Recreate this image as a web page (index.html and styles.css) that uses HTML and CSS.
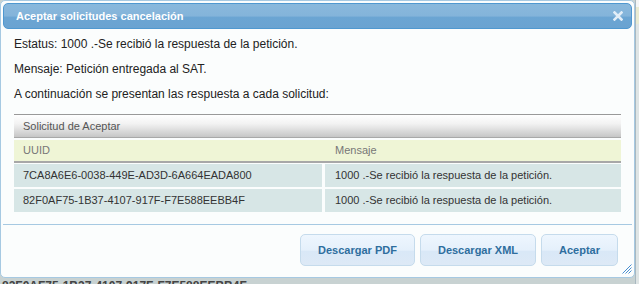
FILE: index.html
```html
<!DOCTYPE html>
<html lang="es">

<head>
    <meta charset="UTF-8" />
    <title>Aceptar solicitudes cancelación</title>
    <link rel="stylesheet" href="styles.css">
</head>

<body>

    <div class="backdrop">
        <div class="backdrop-side"></div>
        <div class="backdrop-row">82F0AF75-1B37-4107-917F-F7E588EEBB4F</div>
    </div>

    <div class="dialog">
        <div class="titlebar">
            <span class="title">Aceptar solicitudes cancelación</span>
            <svg class="close" width="10" height="10" viewBox="0 0 10 10">
                <path d="M1.5 1.5L8.5 8.5M8.5 1.5L1.5 8.5" stroke="#e2edf7" stroke-width="2.6" stroke-linecap="square" />
            </svg>
        </div>

        <div class="content">
            <p>Estatus: 1000 .-Se recibió la respuesta de la petición.</p>
            <p>Mensaje: Petición entregada al SAT.</p>
            <p>A continuación se presentan las respuesta a cada solicitud:</p>

            <div class="grid">
                <div class="grid-caption">Solicitud de Aceptar</div>
                <div class="grid-head">
                    <div class="col-uuid">UUID</div>
                    <div class="col-msg">Mensaje</div>
                </div>
                <div class="grid-row">
                    <div class="col-uuid">7CA8A6E6-0038-449E-AD3D-6A664EADA800</div>
                    <div class="col-msg">1000 .-Se recibió la respuesta de la petición.</div>
                </div>
                <div class="grid-row">
                    <div class="col-uuid">82F0AF75-1B37-4107-917F-F7E588EEBB4F</div>
                    <div class="col-msg">1000 .-Se recibió la respuesta de la petición.</div>
                </div>
            </div>
        </div>

        <div class="buttonpane">
            <button class="btn">Descargar PDF</button>
            <button class="btn">Descargar XML</button>
            <button class="btn">Aceptar</button>
        </div>

        <div class="resize">
            <svg width="10" height="10" viewBox="0 0 10 10">
                <path d="M9.5 0.5L0.5 9.5M9.5 3.5L3.5 9.5M9.5 6.5L6.5 9.5" stroke="#4a8fd0" stroke-width="1" fill="none" />
            </svg>
        </div>
    </div>

</body>

</html>
```

FILE: styles.css
```css
* {
    margin: 0;
    padding: 0;
    box-sizing: border-box;
}

body {
    font-family: "Liberation Sans", Arial, sans-serif;
    font-size: 12px;
    background: #c8d2d2;
    width: 639px;
    height: 284px;
    overflow: hidden;
    position: relative;
}

/* pagina detras del dialogo */
.backdrop {
    position: absolute;
    left: 0;
    top: 0;
    width: 639px;
    height: 284px;
}

.backdrop-side {
    position: absolute;
    left: 635px;
    top: 0;
    width: 4px;
    height: 284px;
    background: linear-gradient(to bottom, #f4f6f6 0px, #f4f6f6 7px, #e9ebd2 7px, #e9ebd2 24px, #dfe5e5 24px);
    border-left: 1px solid #a9b8c0;
}

.backdrop-row {
    position: absolute;
    left: 2px;
    top: 279px;
    font-size: 12px;
    font-weight: bold;
    color: #444;
}

.dialog {
    position: absolute;
    left: 0;
    top: 0;
    width: 635px;
    height: 278px;
    background: #fbfdfd;
    border: 1px solid #a6c9e2;
    border-radius: 5px;
    padding: 2px;
    display: flex;
    flex-direction: column;
}

.titlebar {
    height: 26px;
    border: 1px solid #4f98d0;
    border-radius: 5px;
    background: linear-gradient(to bottom, #89b8dc 0%, #84b4da 50%, #6ba5d3 55%, #6aa3d1 100%);
    display: flex;
    justify-content: space-between;
    align-items: center;
    padding: 0 8px 0 12px;
    color: #fff;
}

.title {
    font-weight: bold;
    font-size: 11px;
}

.close {
    display: block;
}

.content {
    flex: 1;
    padding: 8px 11px 0 11px;
    color: #222;
}

.content p {
    line-height: 14px;
    margin-bottom: 11px;
}

.grid {
    margin-top: 13px;
    border-top: 1px solid #999;
}

.grid-caption {
    height: 23px;
    line-height: 22px;
    padding-left: 9px;
    font-size: 11px;
    color: #555;
    background: linear-gradient(to bottom, #ffffff 0%, #f2f2f2 40%, #c6c6c6 100%);
    border-bottom: 1px solid #a8a8a8;
}

.grid-head {
    display: flex;
    margin-top: 2px;
    height: 23px;
    line-height: 21px;
    background: #eff5d6;
    border-bottom: 2px solid #a8a8a8;
    color: #777;
    font-size: 11px;
}

.grid-row {
    display: flex;
    gap: 3px;
    margin-top: 2px;
    height: 23px;
    line-height: 23px;
    color: #333;
    font-size: 11px;
}

.grid-head + .grid-row {
    margin-top: 1px;
}

.grid-row div {
    background: #d7e6e6;
}

.col-uuid {
    width: 308px;
    padding-left: 9px;
}

.col-msg {
    flex: 1;
    padding-left: 10px;
}

.grid-head .col-msg {
    padding-left: 13px;
}

.buttonpane {
    border-top: 1px solid #a6c9e2;
    height: 51px;
    display: flex;
    justify-content: flex-end;
    align-items: flex-start;
    gap: 5px;
    padding: 9px 14px 0 0;
}

.btn {
    font-family: "Liberation Sans", Arial, sans-serif;
    font-size: 11px;
    font-weight: bold;
    color: #2e6e9e;
    height: 32px;
    padding: 0 17px;
    border: 1px solid #c5dbec;
    border-radius: 5px;
    background: linear-gradient(to bottom, #eef6fe 0%, #e5f0fb 50%, #d9e8f7 55%, #dde9f6 100%);
    cursor: pointer;
}

.resize {
    position: absolute;
    right: 2px;
    bottom: 3px;
    width: 10px;
    height: 10px;
    line-height: 0;
}
```
